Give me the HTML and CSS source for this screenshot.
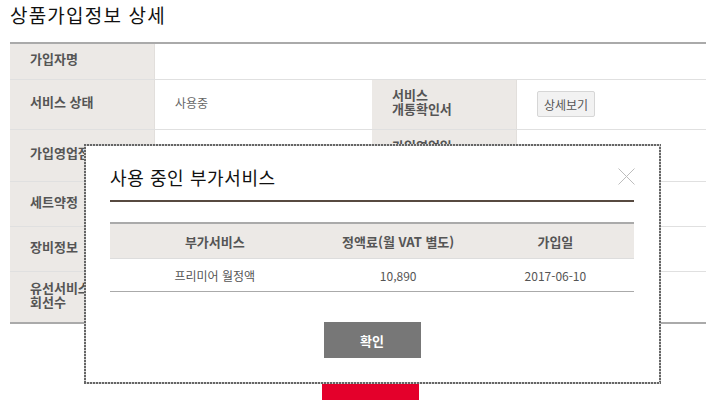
FILE: index.html
```html
<!DOCTYPE html>
<html lang="ko">

<head>
  <meta charset="utf-8">
  <link rel="stylesheet" href="styles.css">
</head>

<body>
  <div class="page">
    <h1 class="page-title">상품가입정보 상세</h1>

    <div class="info-table">
      <div class="info-row row-1">
        <div class="info-th">가입자명</div>
        <div class="info-td wide"></div>
      </div>
      <div class="info-row row-2">
        <div class="info-th">서비스 상태</div>
        <div class="info-td">사용중</div>
        <div class="info-th">서비스<br>개통확인서</div>
        <div class="info-td last"><button class="btn-small">상세보기</button></div>
      </div>
      <div class="info-row row-3">
        <div class="info-th">가입영업점</div>
        <div class="info-td"></div>
        <div class="info-th">가입영업일<br>자</div>
        <div class="info-td last"></div>
      </div>
      <div class="info-row row-4">
        <div class="info-th">세트약정</div>
        <div class="info-td"></div>
        <div class="info-th">약정기간</div>
        <div class="info-td last"></div>
      </div>
      <div class="info-row row-5">
        <div class="info-th">장비정보</div>
        <div class="info-td"></div>
        <div class="info-th">장비모델</div>
        <div class="info-td last"></div>
      </div>
      <div class="info-row row-6">
        <div class="info-th">유선서비스<br>회선수</div>
        <div class="info-td"></div>
        <div class="info-th">회선정보</div>
        <div class="info-td last"></div>
      </div>
    </div>

    <div class="btn-area">
      <button class="btn-red">목록</button>
    </div>
  </div>

  <!-- layer popup -->
  <div class="layer-pop">
    <div class="pop-head">
      <h2 class="pop-title">사용 중인 부가서비스</h2>
    </div>
    <button class="pop-close" aria-label="닫기">
      <svg width="17" height="17" viewBox="0 0 17 17">
        <path d="M0.5 0.5 L16.5 16.5 M16.5 0.5 L0.5 16.5" stroke="#bdbdbd" stroke-width="1" fill="none" />
      </svg>
    </button>

    <table class="pop-table">
      <colgroup>
        <col style="width:40%">
        <col style="width:30%">
        <col style="width:30%">
      </colgroup>
      <thead>
        <tr>
          <th>부가서비스</th>
          <th>정액료(월 VAT 별도)</th>
          <th>가입일</th>
        </tr>
      </thead>
      <tbody>
        <tr>
          <td>프리미어 월정액</td>
          <td>10,890</td>
          <td>2017-06-10</td>
        </tr>
      </tbody>
    </table>

    <div class="pop-btns">
      <button class="btn-gray">확인</button>
    </div>
  </div>
</body>

</html>
```

FILE: styles.css
```css
html,
body {
  overflow: hidden;
}

body {
  margin: 0;
  font-family: "Noto Sans CJK KR", "DejaVu Sans", sans-serif;
  color: #333;
  background-color: #fff;
  position: relative;
  height: 400px;
}

.page {
  width: 721px;
  padding-left: 10px;
}

.page-title {
  margin: 0;
  font-size: 19px;
  line-height: 30px;
  font-weight: normal;
  color: #111;
  letter-spacing: 1.2px;
}

/* detail table */
.info-table {
  margin-top: 12px;
  border-top: 2px solid #aaa;
  border-bottom: 2px solid #aaa;
}

.info-row {
  display: flex;
  border-bottom: 1px solid #e0e0e0;
}

.info-row:last-child {
  border-bottom: none;
}

.row-1 { height: 35px; }
.row-2 { height: 49px; }
.row-3 { height: 51px; }
.row-4 { height: 44px; }
.row-5 { height: 44px; }
.row-6 { height: 50px; }

.info-th {
  width: 124px;
  padding: 0 0 5px 20px;
  background-color: #ece9e6;
  border-right: 1px solid #e2dfdc;
  display: flex;
  align-items: center;
  font-size: 13px;
  line-height: 14px;
  font-weight: bold;
  color: #555;
}

.info-td {
  width: 197px;
  padding: 0 0 5px 20px;
  display: flex;
  align-items: center;
  font-size: 12px;
  color: #666;
}

.info-td.wide {
  flex: 1;
}

.info-td.last {
  flex: 1;
}

.btn-small {
  height: 26px;
  margin-top: 4px;
  padding: 0 6px;
  font-family: inherit;
  font-size: 12px;
  color: #555;
  background-color: #f2f2f2;
  border: 1px solid #d6d6d6;
  border-radius: 2px;
}

.btn-area {
  margin-top: 20px;
  text-align: center;
}

.btn-red {
  width: 97px;
  height: 60px;
  border: none;
  background-color: #e4002b;
  color: #fff;
  font-family: inherit;
  font-size: 13px;
  font-weight: bold;
}

/* layer popup, border drawn as 2px dots with 1px gaps */
.layer-pop {
  position: absolute;
  left: 84px;
  top: 144px;
  width: 524px;
  padding: 21px 27px 26px 26px;
  background:
    repeating-linear-gradient(90deg, #666 0 2px, #d0d0d0 2px 3px) top / 100% 2px no-repeat,
    repeating-linear-gradient(90deg, #666 0 2px, #d0d0d0 2px 3px) bottom / 100% 2px no-repeat,
    repeating-linear-gradient(180deg, #666 0 2px, #d0d0d0 2px 3px) left / 2px 100% no-repeat,
    repeating-linear-gradient(180deg, #666 0 2px, #d0d0d0 2px 3px) right / 2px 100% no-repeat,
    #fff;
}

.pop-head {
  padding-bottom: 11px;
  border-bottom: 2px solid #574a40;
}

.pop-title {
  margin: 0;
  font-size: 18px;
  line-height: 24px;
  font-weight: normal;
  color: #111;
  letter-spacing: 0.6px;
}

.pop-close {
  position: absolute;
  top: 24px;
  right: 26px;
  width: 17px;
  height: 17px;
  padding: 0;
  border: none;
  background: none;
}

.pop-close svg {
  display: block;
}

.pop-table {
  width: 100%;
  margin-top: 20px;
  border-collapse: collapse;
  table-layout: fixed;
  border-top: 2px solid #aaa;
  border-bottom: 1px solid #aaa;
}

.pop-table th {
  height: 34px;
  padding: 0;
  background-color: #ece9e6;
  border-bottom: 1px solid #ddd;
  font-size: 13px;
  font-weight: bold;
  color: #555;
  text-align: center;
}

.pop-table td {
  height: 32px;
  padding: 0;
  font-size: 12px;
  color: #555;
  text-align: center;
}

.pop-btns {
  margin-top: 30px;
  text-align: center;
}

.btn-gray {
  width: 97px;
  height: 36px;
  border: none;
  background-color: #777;
  color: #fff;
  font-family: inherit;
  font-size: 13px;
  font-weight: bold;
}
```
